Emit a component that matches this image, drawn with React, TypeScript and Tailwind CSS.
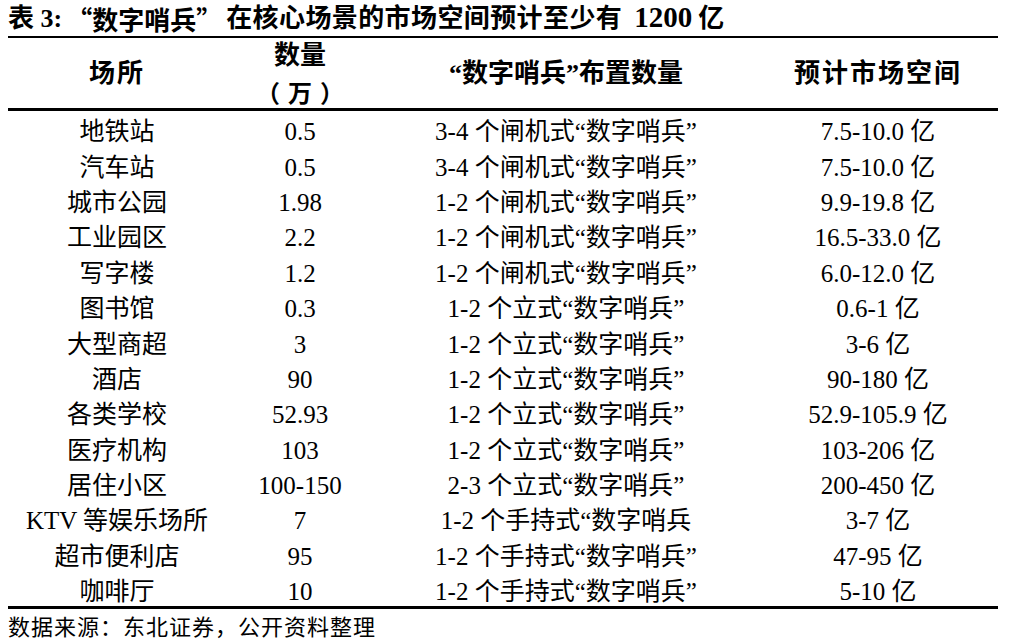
const rows: [string, string, string, string][] = [
  ["地铁站", "0.5", "3-4 个闸机式“数字哨兵”", "7.5-10.0 亿"],
  ["汽车站", "0.5", "3-4 个闸机式“数字哨兵”", "7.5-10.0 亿"],
  ["城市公园", "1.98", "1-2 个闸机式“数字哨兵”", "9.9-19.8 亿"],
  ["工业园区", "2.2", "1-2 个闸机式“数字哨兵”", "16.5-33.0 亿"],
  ["写字楼", "1.2", "1-2 个闸机式“数字哨兵”", "6.0-12.0 亿"],
  ["图书馆", "0.3", "1-2 个立式“数字哨兵”", "0.6-1 亿"],
  ["大型商超", "3", "1-2 个立式“数字哨兵”", "3-6 亿"],
  ["酒店", "90", "1-2 个立式“数字哨兵”", "90-180 亿"],
  ["各类学校", "52.93", "1-2 个立式“数字哨兵”", "52.9-105.9 亿"],
  ["医疗机构", "103", "1-2 个立式“数字哨兵”", "103-206 亿"],
  ["居住小区", "100-150", "2-3 个立式“数字哨兵”", "200-450 亿"],
  ["KTV 等娱乐场所", "7", "1-2 个手持式“数字哨兵", "3-7 亿"],
  ["超市便利店", "95", "1-2 个手持式“数字哨兵”", "47-95 亿"],
  ["咖啡厅", "10", "1-2 个手持式“数字哨兵”", "5-10 亿"],
];

const cols = "grid grid-cols-[218px_148px_384px_240px]";

export default function App() {
  return (
    <div className="w-[1016px] h-[640px] bg-white pl-2 pr-[18px] text-black font-['Liberation_Serif','Noto_Sans_CJK_SC',serif]">
      <div className="h-[36px] flex items-end pb-[4px] text-[26px] font-bold leading-none whitespace-nowrap">
        表 3:{" "}
        <span className="font-['Noto_Sans_CJK_SC',sans-serif] ml-1">“数字哨兵”</span>
        <span className="ml-1 tracking-[0.4px]">在核心场景的市场空间预计至少有</span>
        <span className="ml-3 text-[29px]">1200</span>
        <span className="ml-[6px]">亿</span>
      </div>

      <div className="border-t-2 border-b-[3px] border-black">
        <div className={`${cols} h-[73px] items-center border-b-[3px] border-black text-[26px] font-bold leading-[36px] text-center`}>
          <div className="tracking-[2px]">场所</div>
          <div>
            <div>数量</div>
            <div className="font-['Noto_Sans_CJK_SC',sans-serif] text-[24px] tracking-[8px] pl-2">（万）</div>
          </div>
          <div>“数字哨兵”布置数量</div>
          <div className="tracking-[2px]">预计市场空间</div>
        </div>

        {rows.map((r, i) => (
          <div key={i} className={`${cols} h-[35.4px] items-center text-[25px] leading-none text-center pt-[6px]`}>
            <div>{r[0]}</div>
            <div>{r[1]}</div>
            <div>{r[2]}</div>
            <div>{r[3]}</div>
          </div>
        ))}
      </div>

      <div className="pt-[4px] text-[22px] tracking-[1px] leading-[24px] whitespace-nowrap font-['Noto_Sans_CJK_SC',sans-serif]">
        数据来源：东北证券，公开资料整理
      </div>
    </div>
  );
}
